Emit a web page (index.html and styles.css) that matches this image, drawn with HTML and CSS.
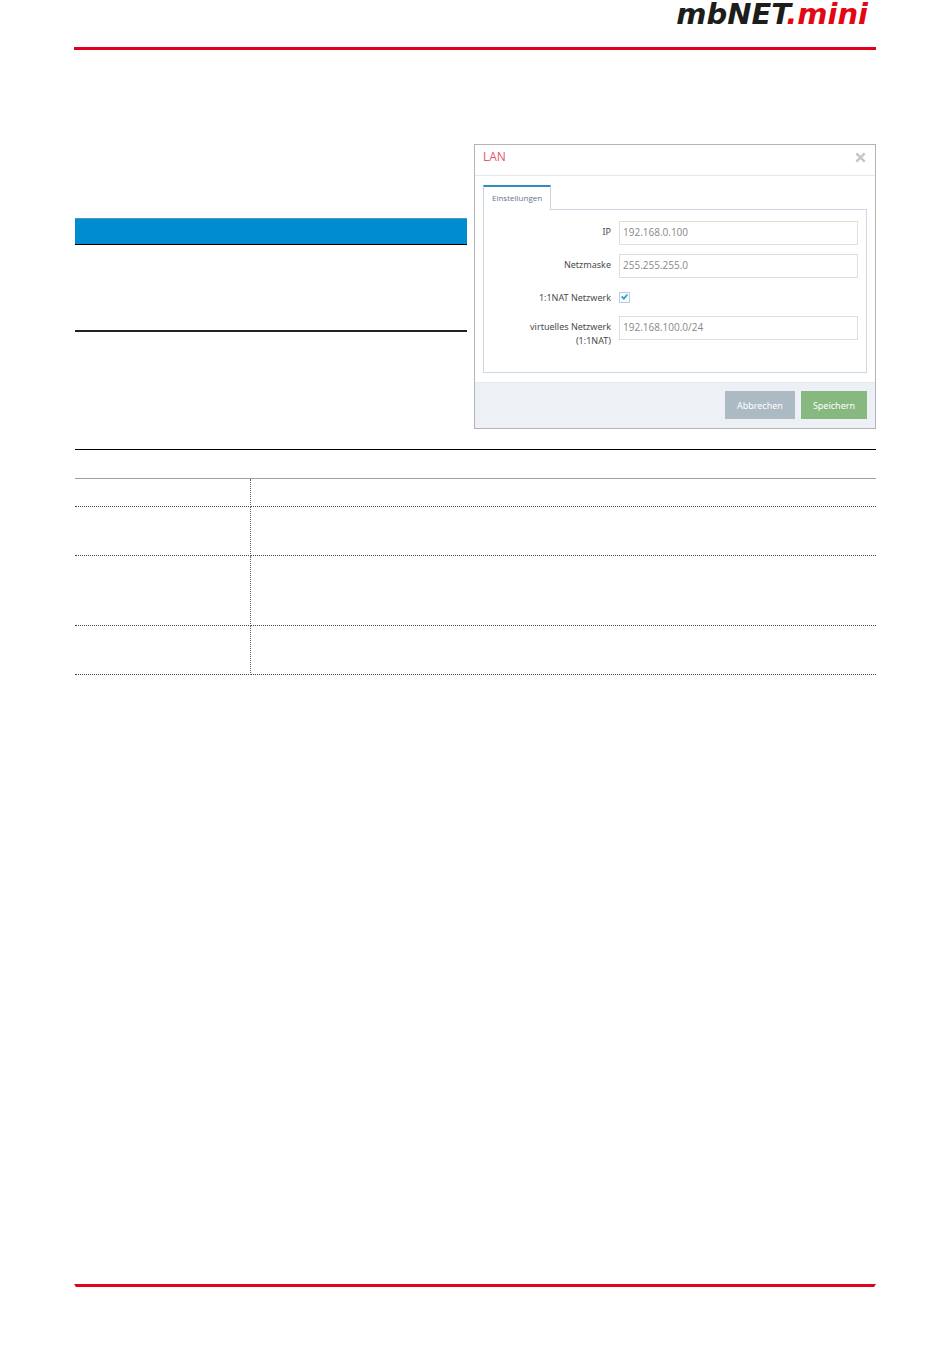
FILE: index.html
```html
<!DOCTYPE html>
<html lang="de">
<head>
    <meta charset="UTF-8">
    <meta name="viewport" content="width=device-width, initial-scale=1.0">
    <title>mbNET.mini</title>
    <link rel="stylesheet" href="styles.css">
</head>
<body>
    <header class="page-header">
        <div class="logo">mbNET<span class="logo-mini">.mini</span></div>
    </header>

    <main class="content">
        <div class="intro">
            <div class="summary">
                <div class="summary-head"></div>
                <div class="summary-body"></div>
            </div>

            <form class="dialog">
                <div class="dialog-header">
                    <h1 class="dialog-title">LAN</h1>
                    <button type="button" class="close" aria-label="Schließen">
                        <svg width="11" height="11" viewBox="0 0 11 11">
                            <path d="M1.3 1.3 L9.7 9.7 M9.7 1.3 L1.3 9.7" stroke="#c6c6c6" stroke-width="2.4" fill="none"/>
                        </svg>
                    </button>
                </div>
                <div class="dialog-body">
                    <button type="button" class="tab">Einstellungen</button>
                    <div class="panel">
                        <div class="field">
                            <label for="ip">IP</label>
                            <input type="text" class="text-input" id="ip" value="192.168.0.100">
                        </div>
                        <div class="field">
                            <label for="mask">Netzmaske</label>
                            <input type="text" class="text-input" id="mask" value="255.255.255.0">
                        </div>
                        <div class="field field-check">
                            <label for="nat">1:1NAT Netzwerk</label>
                            <div class="check-cell"><input type="checkbox" class="check" id="nat" checked></div>
                        </div>
                        <div class="field">
                            <label for="virtual">virtuelles Netzwerk<br>(1:1NAT)</label>
                            <input type="text" class="text-input" id="virtual" value="192.168.100.0/24">
                        </div>
                    </div>
                </div>
                <div class="dialog-footer">
                    <button type="button" class="btn btn-cancel">Abbrechen</button>
                    <button type="button" class="btn btn-save">Speichern</button>
                </div>
            </form>
        </div>

        <table class="details">
            <thead>
                <tr><th class="name"></th><th></th></tr>
            </thead>
            <tbody>
                <tr class="row-small"><td class="name"></td><td></td></tr>
                <tr class="row-medium"><td class="name"></td><td></td></tr>
                <tr class="row-large"><td class="name"></td><td></td></tr>
                <tr class="row-medium"><td class="name"></td><td></td></tr>
            </tbody>
        </table>
    </main>

    <footer class="page-footer"></footer>
</body>
</html>
```
FILE: styles.css
```css
* {
    box-sizing: border-box;
}

body {
    display: flex;
    flex-direction: column;
    min-height: 100vh;
    margin: 0;
    padding: 0 74px;
    background-color: #fff;
    font-family: "Noto Sans", "Open Sans", sans-serif;
    font-size: 9px;
    color: #555;
}

/* header and footer rules */
.page-header {
    height: 50px;
    padding-right: 8px;
    border-bottom: 3px solid #e2001a;
}

.logo {
    font-family: "DejaVu Sans", sans-serif;
    font-size: 29px;
    font-weight: bold;
    font-style: italic;
    line-height: 28px;
    text-align: right;
    color: #1d1d1b;
}

.logo-mini {
    color: #e30613;
}

.page-footer {
    height: 3px;
    margin-top: auto;
    margin-bottom: 73px;
    background-color: #e2001a;
    clip-path: polygon(0 0, 100% 0, calc(100% - 2px) 100%, 2px 100%);
}

.content {
    padding: 94px 0 20px 1px;
}

.intro {
    display: flex;
    gap: 7px;
    align-items: flex-start;
}

/* left summary box */
.summary {
    flex: 1;
    padding-top: 74px;
}

.summary-head {
    height: 27px;
    background-color: #008dd0;
    border-top: 1px solid #4a9cc4;
    border-bottom: 1px solid #000;
}

.summary-body {
    height: 87px;
    border-bottom: 2px solid #222;
}

/* dialog */
.dialog {
    flex: 0 0 402px;
    border: 1px solid #b4b4b4;
}

.dialog-header {
    display: flex;
    justify-content: space-between;
    align-items: center;
    height: 31px;
    padding: 0 9px 6px 8px;
    border-bottom: 1px solid #e8e8e8;
}

.dialog-title {
    margin: 0;
    font-family: "Open Sans", sans-serif;
    font-size: 12px;
    font-weight: normal;
    line-height: 22px;
    color: #e5566a;
}

button {
    font-family: inherit;
    cursor: pointer;
}

.close {
    display: flex;
    padding: 0;
    border: none;
    background: none;
}

.dialog-body {
    padding: 9px 8px;
}

.tab {
    position: relative;
    display: block;
    height: 25px;
    margin-bottom: -1px;
    padding: 0 8px 2px;
    border: 1px solid #c9d5e0;
    border-top: 2px solid #2e8cc4;
    border-bottom: none;
    background-color: #fff;
    font-family: "Open Sans", sans-serif;
    font-size: 8px;
    color: #657688;
}

.panel {
    display: flex;
    flex-direction: column;
    gap: 9px;
    padding: 11px 8px 32px;
    border: 1px solid #ccd8e4;
}

.field {
    display: flex;
    align-items: flex-start;
    gap: 8px;
    height: 24px;
}

.field-check {
    height: 20px;
}

.field label {
    flex: 0 0 119px;
    padding-top: 4px;
    line-height: 14px;
    text-align: right;
    color: #4a4a4a;
}

.text-input {
    flex: 1;
    min-width: 0;
    height: 24px;
    padding: 0 3px 2px;
    border: 1px solid #dedede;
    background-color: #fff;
    font-family: "Open Sans", sans-serif;
    font-size: 10px;
    color: #888;
}

.check-cell {
    display: flex;
    align-items: center;
    height: 20px;
}

.check {
    appearance: none;
    display: flex;
    align-items: center;
    justify-content: center;
    width: 11px;
    height: 11px;
    margin: 0;
    border: 1px solid #c2ccd4;
    background-color: #f6fafc;
}

.check:checked::before {
    content: "";
    width: 7px;
    height: 6px;
    background-color: #2a9fd8;
    clip-path: polygon(0 50%, 18% 30%, 40% 55%, 84% 0, 100% 18%, 42% 100%);
}

.dialog-footer {
    display: flex;
    justify-content: flex-end;
    gap: 6px;
    padding: 8px 8px 9px;
    background-color: #edf1f6;
    border-top: 1px solid #e6eaee;
}

.btn {
    height: 28px;
    padding: 0 11px;
    border: 1px solid #abbac3;
    background-color: #abbac3;
    font-size: 9px;
    color: #fff;
}

.btn-save {
    border-color: #87b87f;
    background-color: #87b87f;
}

/* details table */
.details {
    width: 100%;
    margin-top: 20px;
    border-collapse: separate;
    border-spacing: 0;
    table-layout: fixed;
}

.details th {
    height: 30px;
    padding: 0;
    border-top: 1px solid #000;
    border-bottom: 1px solid #a0a0a0;
}

.details td {
    padding: 0;
    border-bottom: 1px dotted #444;
}

.details .name {
    width: 176px;
}

.details td.name {
    border-right: 1px dotted #666;
}

.row-small {
    height: 28px;
}

.row-medium {
    height: 49px;
}

.row-large {
    height: 70px;
}
```
